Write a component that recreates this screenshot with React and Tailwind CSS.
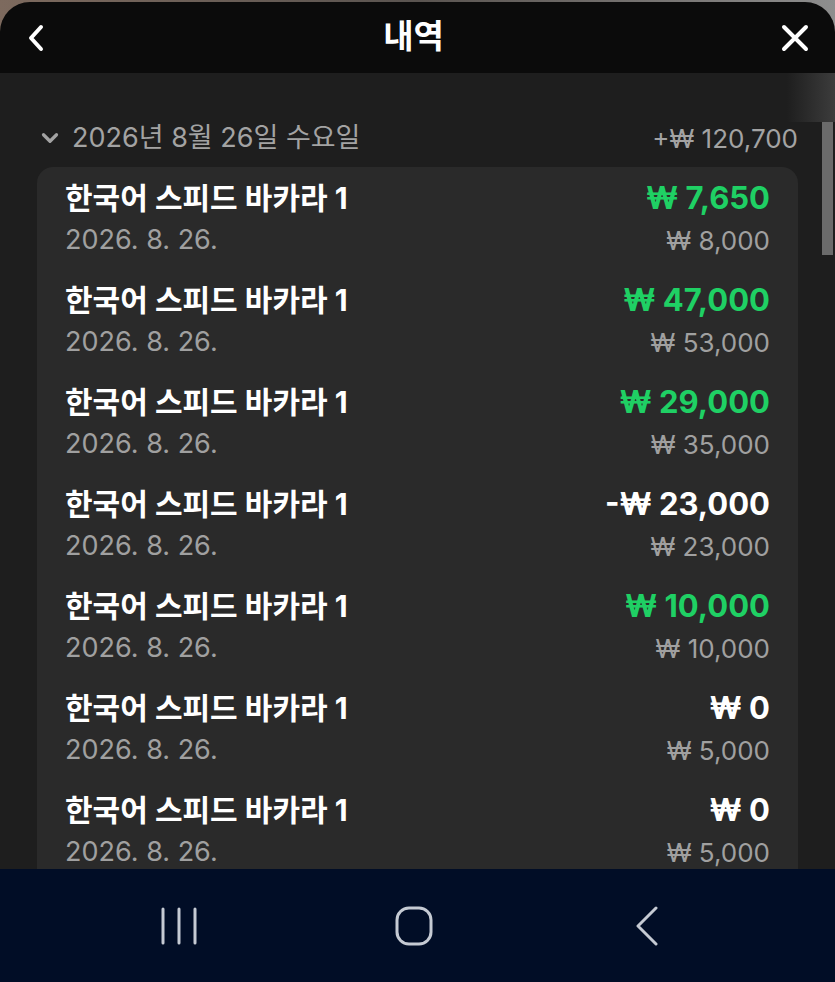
import React from 'react'
import { ChevronDown } from 'lucide-react'

const rows = [
    { amount: '₩ 7,650', bet: '₩ 8,000', tone: 'win' },
    { amount: '₩ 47,000', bet: '₩ 53,000', tone: 'win' },
    { amount: '₩ 29,000', bet: '₩ 35,000', tone: 'win' },
    { amount: '-₩ 23,000', bet: '₩ 23,000', tone: 'loss' },
    { amount: '₩ 10,000', bet: '₩ 10,000', tone: 'win' },
    { amount: '₩ 0', bet: '₩ 5,000', tone: 'zero' },
    { amount: '₩ 0', bet: '₩ 5,000', tone: 'zero' },
    { amount: '₩ 0', bet: '₩ 5,000', tone: 'zero' },
]

const font = { fontFamily: '"Inter", "Noto Sans CJK KR", sans-serif' }

export default function App() {
    return (
        <div className="w-[835px] h-[982px] flex flex-col overflow-hidden pt-[2px] bg-gradient-to-r from-[#7d6a5e] via-[#5a5450] to-[#8e8e8e]" style={font}>

            {/* header */}
            <div className="h-[71px] shrink-0 rounded-t-[30px] bg-[#0b0b0b] flex items-center justify-between px-[26px]">
                <svg width="20" height="28" viewBox="0 0 20 28" fill="none">
                    <path d="M15 3 L5 14 L15 25" stroke="white" strokeWidth="4" strokeLinecap="round" strokeLinejoin="round" />
                </svg>
                <div className="text-white text-[33px] font-bold leading-none -mt-[2px]">내역</div>
                <svg width="28" height="28" viewBox="0 0 28 28" fill="none">
                    <path d="M3 3 L25 25 M25 3 L3 25" stroke="white" strokeWidth="4" strokeLinecap="round" />
                </svg>
            </div>

            {/* body */}
            <div className="flex-1 relative overflow-hidden bg-[#1e1e1e] px-[37px]">
                <div className="absolute right-0 top-0 w-[48px] h-[49px] bg-gradient-to-r from-transparent to-[#3c3c3c]" />
                <div className="absolute right-[2px] top-[49px] w-[11px] h-[133px] bg-[#6b6b6b]" />

                <div className="mt-[47px] h-[36px] flex items-center justify-between">
                    <div className="flex items-center">
                        <ChevronDown className="ml-0 mr-[9px]" size={26} color="#a3a3a3" strokeWidth={3} />
                        <span className="text-[27px] text-[#a3a3a3]">2026년 8월 26일 수요일</span>
                    </div>
                    <span className="text-[26px] text-[#a3a3a3]">+₩ 120,700</span>
                </div>

                <div className="mt-[11px] rounded-[16px] bg-[#2a2a2a]">
                    {rows.map((r, i) => (
                        <div key={i} className="flex justify-between px-[28px] pt-[10px] pb-[8px]">
                            <div className="flex flex-col">
                                <div className="h-[42px] flex items-center text-[30px] font-bold text-white">한국어 스피드 바카라 1</div>
                                <div className="h-[42px] flex items-center text-[27px] text-[#a0a0a0]">2026. 8. 26.</div>
                            </div>
                            <div className="flex flex-col items-end">
                                <div className={'h-[42px] flex items-center text-[31px] font-bold ' + (r.tone === 'win' ? 'text-[#1fd064]' : 'text-white')}>{r.amount}</div>
                                <div className="h-[42px] flex items-center text-[26px] text-[#a0a0a0]">{r.bet}</div>
                            </div>
                        </div>
                    ))}
                </div>
            </div>

            {/* system nav */}
            <div className="h-[113px] shrink-0 bg-[#010d26] flex items-center justify-between pl-[159px] pr-[167px]">
                <svg width="40" height="40" viewBox="0 0 40 40" fill="none">
                    <path d="M4 3 V37 M20 3 V37 M36 3 V37" stroke="#c5cad3" strokeWidth="3" strokeLinecap="round" />
                </svg>
                <svg width="40" height="40" viewBox="0 0 40 40" fill="none">
                    <rect x="3" y="2" width="34" height="36" rx="12" stroke="#c5cad3" strokeWidth="3" />
                </svg>
                <svg width="40" height="40" viewBox="0 0 40 40" fill="none">
                    <path d="M28 2 L10 20 L28 38" stroke="#c5cad3" strokeWidth="3" strokeLinecap="round" strokeLinejoin="round" />
                </svg>
            </div>
        </div>
    )
}
